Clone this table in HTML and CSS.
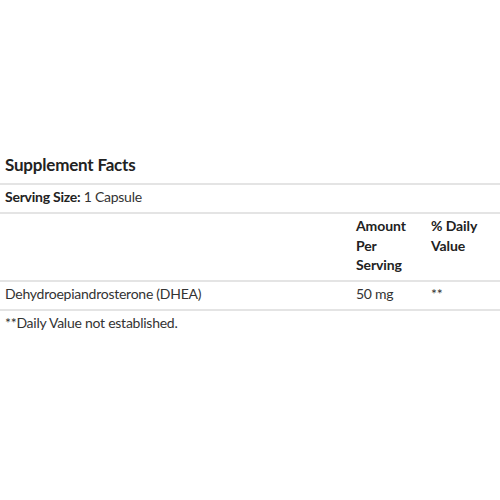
FILE: index.html
```html
<!DOCTYPE html>
<html>
<head>
<meta charset="utf-8">
<link rel="stylesheet" href="styles.css">
</head>
<body>
<div class="facts">
  <h2 class="title">Supplement Facts</h2>
  <div class="row"><div class="cell"><b>Serving Size:</b> 1 Capsule</div></div>
  <div class="row grid">
    <div class="cell"></div>
    <div class="cell head">Amount<br>Per<br>Serving</div>
    <div class="cell head">% Daily<br>Value</div>
  </div>
  <div class="row grid last">
    <div class="cell">Dehydroepiandrosterone (DHEA)</div>
    <div class="cell">50 mg</div>
    <div class="cell">**</div>
  </div>
  <p class="note">**Daily Value not established.</p>
</div>
</body>
</html>
```
FILE: styles.css
```css
html, body {
  margin: 0;
  padding: 0;
  background: #fff;
}
body {
  font-family: Lato, "Open Sans", sans-serif;
  font-size: 14px;
  line-height: 19.5px;
  letter-spacing: -0.25px;
  color: #333;
}
.facts {
  padding-top: 153px;
}
.title {
  margin: 0;
  padding: 0 5px 6px;
  font-size: 17px;
  line-height: 24px;
  letter-spacing: -0.2px;
  font-weight: 700;
  color: #222;
}
.row {
  border-top: 2px solid #e4e4e4;
}
.last {
  border-bottom: 2px solid #e4e4e4;
}
.grid {
  display: grid;
  grid-template-columns: 351px 75px 1fr;
}
.cell {
  padding: 2px 5px 5.5px;
}
.cell b {
  font-weight: 700;
  color: #222;
}
.head {
  font-weight: 700;
  letter-spacing: -0.1px;
  color: #222;
}
.note {
  margin: 0;
  padding: 2px 5px;
}
```
